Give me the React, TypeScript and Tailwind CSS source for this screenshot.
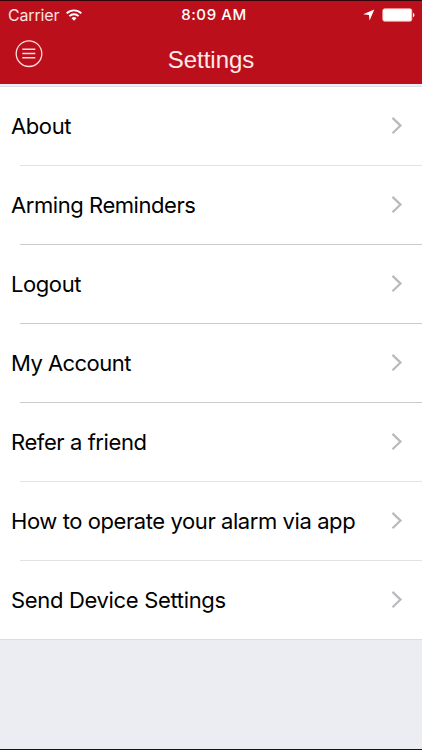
const rows = [
  { label: "About", line: "bg-[#e2e2e4]", tracking: "tracking-[-0.4px]" },
  { label: "Arming Reminders", line: "bg-[#cbcbcd]", tracking: "tracking-[-0.44px]" },
  { label: "Logout", line: "bg-[#cbcbcd]", tracking: "tracking-[-0.42px]" },
  { label: "My Account", line: "bg-[#cbcbcd]", tracking: "tracking-[-0.54px]" },
  { label: "Refer a friend", line: "bg-[#e2e2e4]", tracking: "tracking-[-0.42px]" },
  { label: "How to operate your alarm via app", line: "bg-[#e2e2e4]", tracking: "tracking-[-0.42px]" },
  { label: "Send Device Settings", line: "", tracking: "tracking-[-0.33px]" },
];

function WifiIcon() {
  return (
    <svg width="16" height="12" viewBox="0 0 16 12" fill="none" stroke="white" strokeWidth="1.9">
      <path d="M0.7 4.4a10.4 10.4 0 0 1 14.6 0" />
      <path d="M3.4 7.2a6.5 6.5 0 0 1 9.2 0" />
      <path d="M8 11.8L5.5 9.3a3.5 3.5 0 0 1 5 0z" fill="white" stroke="none" />
    </svg>
  );
}

function StatusBar() {
  return (
    <div className="grid h-[26px] grid-cols-3 items-center pt-px font-['Inter','Liberation_Sans',sans-serif] text-white">
      <div className="flex items-center gap-[7px] pl-2">
        <span className="text-[16px] leading-5 tracking-[-0.15px] text-[#ffe3e3]">Carrier</span>
        <WifiIcon />
      </div>
      <span className="pl-[6px] text-center text-[15px] leading-5 font-medium tracking-[0.6px] whitespace-nowrap">8:09 AM</span>
      <div className="flex items-center justify-end gap-[7px] pr-[7px]">
        <svg width="12" height="12" viewBox="0 0 12 12" fill="white">
          <path d="M11.3 0.4L6.6 11.6L5.9 6L0.2 5.3z" />
        </svg>
        <svg width="33" height="14" viewBox="0 0 33 14">
          <rect x="0.8" y="0.8" width="29" height="12.4" rx="1.8" fill="white" stroke="#ffb9bd" strokeWidth="0.8" />
          <path d="M31 4.8c2 0.8 2 3.6 0 4.4z" fill="white" />
        </svg>
      </div>
    </div>
  );
}

function NavBar() {
  return (
    <div className="grid h-[57px] grid-cols-[1fr_auto_1fr]">
      <button className="mt-[13px] ml-[15px] size-7" aria-label="Menu">
        <svg width="28" height="28" viewBox="0 0 28 28" fill="none" stroke="#ffdcdc">
          <circle cx="14" cy="13.7" r="12.8" strokeWidth="1.3" />
          <path d="M7.3 9.2h13M7.3 13.5h13M7.3 17.8h13" strokeWidth="1.4" />
        </svg>
      </button>
      <h1 className="mt-[19px] font-['Liberation_Sans',sans-serif] text-[24px] leading-7 text-[#ffeaea]">Settings</h1>
    </div>
  );
}

export default function App() {
  return (
    <div className="flex h-[750px] w-[422px] flex-col overflow-hidden border-t border-b border-t-[#300408] border-b-[#14131c] bg-[#ecedf3]">
      <header className="bg-[#bc0f1c]">
        <StatusBar />
        <NavBar />
      </header>
      <div className="h-[3px] shrink-0 border-b border-[#dddde6] bg-[#f0eef4]" />

      <ul className="border-b border-[#dcdce0] bg-white font-['Inter','Liberation_Sans',sans-serif]">
        {rows.map((row) => (
          <li key={row.label} className="flex h-[79px] flex-col last:h-[78px]">
            <div className="flex flex-1 items-center justify-between pr-[19px] pl-[11px]">
              <span className={`text-[22px] leading-7 whitespace-nowrap text-black ${row.tracking}`}>{row.label}</span>
              <svg width="12" height="18" viewBox="0 0 12 18" fill="none" stroke="#b9b9be" strokeWidth="2.2">
                <path d="M1.5 0.9L9.5 8.6L1.5 16.3" />
              </svg>
            </div>
            {row.line && <div className={`ml-5 h-px ${row.line}`} />}
          </li>
        ))}
      </ul>
    </div>
  );
}
